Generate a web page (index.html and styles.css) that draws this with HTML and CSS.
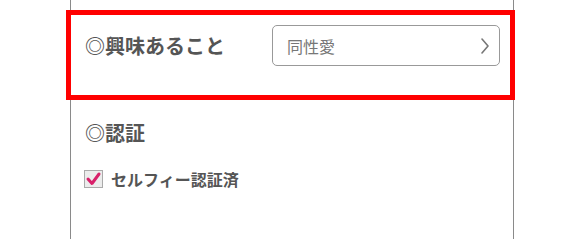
FILE: index.html
```html
<!DOCTYPE html>
<html lang="ja">
<head>
<meta charset="utf-8">
<link rel="stylesheet" href="styles.css">
</head>
<body>
<div class="panel">
  <div class="row interest">
    <div class="label">◎興味あること</div>
    <div class="select">
      <span class="select-text">同性愛</span>
      <svg class="chevron" width="8" height="16" viewBox="0 0 8 16"><polyline points="1,1 7,8 1,15" fill="none" stroke="#777" stroke-width="1.6" stroke-linecap="round" stroke-linejoin="round"/></svg>
    </div>
  </div>
  <div class="label heading">◎認証</div>
  <div class="check-row">
    <span class="checkbox">
      <svg width="17" height="16" viewBox="0 0 17 16"><polyline points="3,8 7,12.5 14,3" fill="none" stroke="#d8206a" stroke-width="3" stroke-linecap="round" stroke-linejoin="round"/></svg>
    </span>
    <span class="check-label">セルフィー認証済</span>
  </div>
</div>
<div class="highlight"></div>
</body>
</html>
```
FILE: styles.css
```css
html, body {
  margin: 0;
  padding: 0;
  background: #fff;
  font-family: "Noto Sans CJK JP", "Noto Sans", sans-serif;
}
body {
  width: 580px;
  height: 239px;
  overflow: hidden;
  position: relative;
}
.panel {
  margin-left: 70px;
  width: 444px;
  height: 239px;
  box-sizing: border-box;
  border-left: 1.5px solid #8a8a8a;
  border-right: 1.5px solid #8a8a8a;
  padding: 25px 13px 0 14px;
}
.row {
  display: flex;
  align-items: center;
  justify-content: space-between;
}
.label {
  font-size: 20px;
  font-weight: 700;
  color: #555;
  line-height: 41px;
}
.select {
  width: 228px;
  height: 41px;
  box-sizing: border-box;
  border: 1px solid #999;
  border-radius: 5px;
  display: flex;
  align-items: center;
  justify-content: space-between;
  padding: 0 10px 0 14px;
}
.select-text {
  font-size: 16px;
  color: #777;
  line-height: 20px;
}
.chevron {
  display: block;
}
.heading {
  margin-top: 53px;
  line-height: 28px;
}
.check-row {
  margin-top: 22px;
  display: flex;
  align-items: center;
  gap: 8px;
  margin-left: -1px;
}
.checkbox {
  width: 19px;
  height: 18px;
  box-sizing: border-box;
  border: 1px solid #aaa;
  background: #ececec;
  display: flex;
  align-items: center;
  justify-content: center;
}
.checkbox svg {
  display: block;
}
.check-label {
  font-size: 16px;
  font-weight: 700;
  color: #555;
  line-height: 20px;
}
.highlight {
  position: absolute;
  left: 66px;
  top: 10px;
  width: 449px;
  height: 90px;
  box-sizing: border-box;
  border: 5.5px solid #f00;
}
```
